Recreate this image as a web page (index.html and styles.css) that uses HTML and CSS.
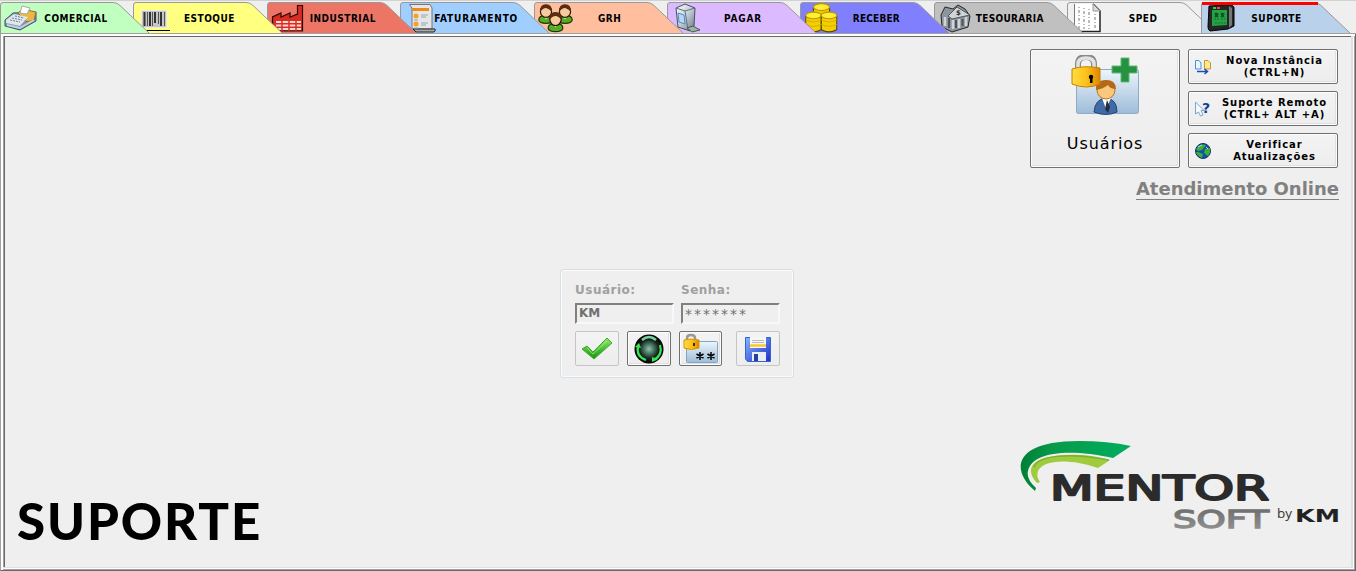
FILE: index.html
```
<!DOCTYPE html>
<html lang="pt-BR">
<head>
<meta charset="utf-8">
<title>Suporte</title>
<link rel="stylesheet" href="styles.css">
</head>
<body>
<svg class="defs" width="0" height="0">
  <defs>
    <path id="tab" d="M.5 33V5Q.5 2.500 3 2.500H113Q117 2.500 120 5.500L149 33"/>
    <linearGradient id="steel" x2="1" y2="1"><stop stop-color="#fff"/><stop offset=".5" stop-color="#c3ccd5"/><stop offset="1" stop-color="#66727e"/></linearGradient>
    <linearGradient id="gold" x2="1"><stop stop-color="#ffdc42"/><stop offset=".5" stop-color="#ffc21a"/><stop offset="1" stop-color="#dc8600"/></linearGradient>
    <linearGradient id="card" x2="0" y2="1"><stop stop-color="#edf5fb"/><stop offset="1" stop-color="#9dbcd9"/></linearGradient>
    <linearGradient id="leaf" x2="0" y2="1"><stop stop-color="#8dec68"/><stop offset="1" stop-color="#16950b"/></linearGradient>
    <linearGradient id="disk" x2="1" y2="1"><stop stop-color="#86b7ff"/><stop offset="1" stop-color="#1c2fc8"/></linearGradient>
    <linearGradient id="green" x2="1"><stop stop-color="#007f35"/><stop offset=".3" stop-color="#079b49"/><stop offset="1" stop-color="#00ad60"/></linearGradient>
    <linearGradient id="soft" x2="0" y2="1"><stop stop-color="#686868"/><stop offset="1" stop-color="#989898"/></linearGradient>
    <radialGradient id="orb" cy=".5"><stop stop-color="#8fc4ae"/><stop offset=".4" stop-color="#3c6656"/><stop offset=".65" stop-color="#17221d"/><stop offset="1" stop-color="#000"/></radialGradient>
    <g id="person"><path d="M-9 9Q-9 3 0 3T9 9Q8 13 0 13T-9 9Z" fill="#58ad20" stroke="#1d3509" stroke-width="1.500"/><path d="M-3 3L0 8L3 3Z" fill="#fff"/><ellipse cy="-2" rx="7" ry="7.500" fill="#f7c99d" stroke="#241207" stroke-width="1.500"/><path d="M-7.500-1Q-8-11 0-11T7.500-1Q5-5 1-6T-7.500-1" fill="#5b2b12"/></g>
    <g id="coins"><path d="M-7-6V7Q0 11 7 7V-6" fill="#f4cf00" stroke="#5c4700"/><ellipse cy="-6" rx="7" ry="3" fill="#ffed36" stroke="#b89700"/><path d="M-7-2Q0 2 7-2M-7 2Q0 6 7 2" fill="none" stroke="#dcb400"/></g>
  </defs>
</svg>
<nav class="tabs">
  <a class="tab comercial"><svg class="shape" width="150" height="34"><use href="#tab"/></svg>
    <svg class="icon" width="38" height="33"><path d="M5 20L13 13L36 12V21L20 30L5 26Z" fill="#8096a9" stroke="#40566a"/><path d="M18 13L22 9L36 12L34 20L27 22Z" fill="#ebb744" stroke="#927135"/><path d="M6 20L14 14L28 17L20 26L6 23Z" fill="#dfe6ec"/><path d="M20 13L22 6L30 8L27 14Z" fill="#fff" stroke="#aaa"/><path d="M10 20L20 22M12 18L22 20M15 16L24 18" stroke="#6f8192" stroke-dasharray="2 1"/><path d="M7 25L20 28L34 20" fill="none" stroke="#c4d2de" stroke-width="2"/></svg><span>COMERCIAL</span></a>
  <a class="tab estoque"><svg class="shape" width="150" height="34"><use href="#tab"/></svg>
    <svg class="icon" width="38" height="33"><path d="M8.500 10.500H33.500V27.500H8.500Z" fill="#c5c5c5" stroke="#e8e8e8"/><path d="M11.500 12V26M17 12V26M22 12V23M28 12V26" stroke="#333" stroke-width="2"/><path d="M14.500 12V26M19.500 12V26M25.500 12V24M31.500 12V26" stroke="#555"/><path d="M11 30.500H37" stroke="#000"/></svg><span>ESTOQUE</span></a>
  <a class="tab industrial"><svg class="shape" width="150" height="34"><use href="#tab"/></svg>
    <svg class="icon" width="38" height="33"><path d="M5.500 31V17L14 13V17L23 13V17L30.500 14V5.500H35.500V31Z" fill="#d82d22" stroke="#2b0806" stroke-width="1.200"/><path d="M9 22H34M9 25.500H34M9 29H34" stroke="#ffd5d0" stroke-width="2"/><path d="M15 18V31M22 18V31M29 18V31M31 8H35" stroke="#d82d22" stroke-width="1.500"/></svg><span>INDUSTRIAL</span></a>
  <a class="tab faturamento"><svg class="shape" width="150" height="34"><use href="#tab"/></svg>
    <svg class="icon" width="38" height="33"><path d="M9.500 4.500H30L32 8V29H12V8Z" fill="#e4e6e8" stroke="#777"/><path d="M13 29H35Q36 31 34 32H16Z" fill="#aaa" stroke="#222"/><path d="M12 8H29V11H12Z" fill="#f08a17"/><circle cx="16" cy="16" r="2.500" fill="#f4a124"/><circle cx="16" cy="24" r="2.500" fill="#f4a124"/><path d="M21 15H28M21 17H26M21 23H28M21 25H26M14 20H18M14 28H18" stroke="#9aa4ac"/></svg><span>FATURAMENTO</span></a>
  <a class="tab grh"><svg class="shape" width="150" height="34"><use href="#tab"/></svg>
    <svg class="icon" width="40" height="33"><use href="#person" transform="translate(12 13) scale(.8)"/><use href="#person" transform="translate(31 13) scale(.8)"/><use href="#person" transform="translate(21.500 21) scale(.82)"/></svg><span>GRH</span></a>
  <a class="tab pagar"><svg class="shape" width="150" height="34"><use href="#tab"/></svg>
    <svg class="icon" width="40" height="33"><path d="M9 8L18 4L28 8L27 26L23 31L11 27Z" fill="url(#steel)" stroke="#45515b"/><path d="M9 8L18 11L28 8M18 11L21 30" stroke="#61717d" fill="none"/><path d="M11 13L17 15L18 24L12 22Z" fill="#b5d9fa" stroke="#538cbb"/><path d="M20 28L26 26L33 30L25 32Z" fill="#9cb3a4" stroke="#455b4e"/></svg><span>PAGAR</span></a>
  <a class="tab receber"><svg class="shape" width="150" height="34"><use href="#tab"/></svg>
    <svg class="icon" width="40" height="33"><use href="#coins" transform="translate(21.500 14) scale(1.150)"/><use href="#coins" transform="translate(13.500 22) scale(1.100)"/><use href="#coins" transform="translate(29 22) scale(1.100)"/></svg><span>RECEBER</span></a>
  <a class="tab tesouraria"><svg class="shape" width="150" height="34"><use href="#tab"/></svg>
    <svg class="icon" width="40" height="33"><path d="M7 15L11 7L19 9L24 5L31 9L36 16L34 27L18 32L8 27Z" fill="#8d949b" stroke="#24282b"/><path d="M14 16L23 7L36 15L18 19Z" fill="#d0d5d8" stroke="#555"/><path d="M19 20V29M25 19V28M32 17V26M11 17V26" stroke="#cfd4d8" stroke-width="2.500"/><path d="M22 20V28M28.500 19V26M15 18V28" stroke="#4b535a" stroke-width="2"/><text x="22" y="15" class="coin">$</text></svg><span>TESOURARIA</span></a>
  <a class="tab sped"><svg class="shape" width="150" height="34"><use href="#tab"/></svg>
    <svg class="icon" width="38" height="33"><path d="M7 4H26L33 11V31H7Z" fill="#fff"/><path d="M7.500 4V31" stroke="#777"/><path d="M26 4L33 11V31.500H9" fill="none" stroke="#222" stroke-width="1.500"/><path d="M26 4V11H33" fill="#ddd" stroke="#999"/><path d="M12 7V29M17 8V29M22 9V29M28 14V29" stroke="#a5a5a5" stroke-width="1.500" stroke-dasharray="1 2 3 2"/></svg><span>SPED</span></a>
  <a class="tab suporte active"><svg class="shape" width="150" height="34"><use href="#tab"/></svg>
    <svg class="icon" width="38" height="33"><path d="M8 6L28 5Q33 5 33 8V26L27 29L9 31Q7 30 7 27Z" fill="#232625" stroke="#000"/><path d="M28 6L31 8V25L28 28Z" fill="#737877"/><path d="M11 10H26V25L11 26Z" fill="#25a344"/><path d="M14 13H17V17H14ZM20 13H23V17H20ZM13 19H18M20 19H25M14 23H25" fill="#0c5825" stroke="#0c5825" stroke-width=".7" stroke-dasharray="2 1"/><path d="M12 8H15" stroke="#3c4" stroke-width="2"/><path d="M16 8H19" stroke="#f44" stroke-width="2"/></svg><span>SUPORTE</span></a>
</nav>
<main class="panel">
  <section class="actions">
    <button class="btn users">
      <svg width="72" height="62"><rect x="7.500" y="14.500" width="62" height="44" rx="2" fill="url(#card)" stroke="#8eabc6"/><path d="M25 57Q26 44 37 43Q48 44 48 57Q37 62 25 57" fill="#416ba7" stroke="#28456e"/><path d="M33 43L37 54L42 43" fill="#fff"/><path d="M38 45L36 54L39 58L41 52Z" fill="#242e3c"/><circle cx="37" cy="35" r="9" fill="#fac77d" stroke="#b9721b"/><path d="M27 35Q26 25 37 25Q47 25 47 34Q41 34 39 30Q34 34 27 35" fill="#b46916"/><path d="M9 18V9Q9 2 17 2T25 9V18" fill="none" stroke="#8a8a8a" stroke-width="6"/><path d="M9 18V9Q9 3 17 3T25 9V18" fill="none" stroke="#e2e2e2" stroke-width="3.500"/><path d="M3 14Q15 10 31 13V29Q18 35 3 29Z" fill="url(#gold)" stroke="#c38000"/><circle cx="22" cy="22" r="2.200"/><path d="M21 23H23.500V28H21Z"/><path d="M52 3H60V11H68V18H60V27H52V18H43V11H52Z" fill="#279142" stroke="#62b974"/></svg>
      <span>Usuários</span>
    </button>
    <div class="stack">
      <button class="btn small"><svg width="18" height="18"><path d="M1.500 2.500H5L7 5V11H1.500Z" fill="#e9f4ff" stroke="#4a92d7"/><path d="M10.500 2.500H14L16.500 5V11H10.500Z" fill="#ffe88f" stroke="#c6962e"/><path d="M3 13.500H13M10.500 11L13.500 13.500L10.500 16" stroke="#174fae" fill="none" stroke-width="1.500"/></svg><span>Nova Instância<br>(CTRL+N)</span></button>
      <button class="btn small"><svg width="18" height="18"><path d="M1.500 2L10 10.500H7L9 15L6.500 16L4.500 12L1.500 14Z" fill="#f6faff" stroke="#77a7cf"/><text x="8" y="13" class="help">?</text></svg><span>Suporte Remoto<br>(CTRL+ ALT +A)</span></button>
      <button class="btn small"><svg width="18" height="18"><circle cx="9" cy="9" r="7.500" fill="#164faa" stroke="#173363"/><path d="M2 7Q6 1 12 3L8 8L4 9ZM11 7L16 6Q17 10 14 14L10 11ZM4 10L9 12L8 16Q3 14 2 10" fill="#3caf35"/><path d="M4 5L8 3M12 5L14 7" stroke="#9de8ff"/></svg><span>Verificar<br>Atualizações</span></button>
    </div>
  </section>
  <a class="online">Atendimento Online</a>
  <form class="login">
    <div class="fields">
      <label>Usuário:<span class="field">KM</span></label>
      <label>Senha:<span class="field stars">*******</span></label>
    </div>
    <div class="tools">
      <button type="button" class="btn tool muted"><svg width="34" height="28"><path d="M2 14L7 11L13 17L27 3L32 8L14 24Z" fill="url(#leaf)" stroke="#3fa838"/><path d="M7 13L13 19L27 6" stroke="#b4ff94" fill="none" opacity=".6"/></svg></button>
      <button type="button" class="btn tool"><svg width="34" height="30"><circle cx="17" cy="15" r="14.500" fill="url(#orb)"/><path d="M10 6Q17 0 24 6" fill="none" stroke="#79d29d" stroke-width="2.500"/><path d="M6 12Q4 23 14 26M28 11Q31 21 22 26" fill="none" stroke="#35e951" stroke-width="2.200"/><path d="M3 13L7 9L9 14ZM20 23L20 28L26 25Z" fill="#35e951"/></svg></button>
      <button type="button" class="btn tool"><svg width="36" height="32"><rect x="4.500" y="8.500" width="31" height="21" rx="1" fill="url(#card)" stroke="#82a3c2"/><path d="M5 8V5Q5 2 9 2T13 5V8" fill="none" stroke="#999" stroke-width="2.500"/><path d="M2 7Q9 5 17 7V15Q9 18 2 15Z" fill="url(#gold)" stroke="#d89500"/><path d="M12 10V13" stroke="#000" stroke-width="1.500"/><path d="M18 19V27M14.500 21L21.500 25M21.500 21L14.500 25M29 19V27M25.500 21L32.500 25M32.500 21L25.500 25" stroke="#000" stroke-width="1.500"/></svg></button>
      <button type="button" class="btn tool muted last"><svg width="28" height="26"><path d="M1.500 1.500H26.500V25.500H3.500L1.500 23Z" fill="url(#disk)" stroke="#3664ce"/><path d="M6 1H22V12H6Z" fill="#f6f6f6"/><path d="M6 9.500H22" stroke="#ffc62b" stroke-width="2.500"/><path d="M8 4.500H20M8 6.500H20" stroke="#bbb"/><path d="M8 16H22V25H8Z" fill="#e8edf6"/><path d="M10 18H14V25H10Z" fill="#25409d"/></svg></button>
    </div>
  </form>
  <footer class="brand">
    <h1>SUPORTE</h1>
    <svg class="logo" width="324" height="100" role="img" aria-label="MentorSoft by KM">
      <path d="M16 61C-8 41-7 11 60 11Q89 11 112 16L94 28C49 18 13 22 9 41Q7 49 17 58Z" fill="url(#green)"/>
      <path d="M18 53C3 36 17 26 48 25Q70 24 91 30L79 38C47 27 23 31 19 41Q17 47 21 52Z" fill="#9fcb3d"/>
      <path d="M15 37C19 26 46 22 90 30" fill="none" stroke="#6aa526" stroke-width="1.500" opacity=".7"/>
      <text class="mentor" x="31" y="70" textLength="219" lengthAdjust="spacingAndGlyphs">MENTOR</text>
      <text class="softtext" x="154" y="98" textLength="96" lengthAdjust="spacingAndGlyphs">SOFT</text>
      <text class="by" x="258" y="88" textLength="15" lengthAdjust="spacingAndGlyphs">by</text>
      <text class="km" x="276" y="92" textLength="45" lengthAdjust="spacingAndGlyphs">KM</text>
    </svg>
  </footer>
</main>
</body>
</html>
```
FILE: styles.css
```
* { box-sizing: border-box; }
body {
  margin: 0;
  width: 1356px;
  height: 571px;
  overflow: hidden;
  display: flex;
  flex-direction: column;
  background: #efefef;
  font-family: "DejaVu Sans", Verdana, sans-serif;
  color: #000;
}
.defs { position: absolute; }
.tabs {
  height: 34px;
  flex: none;
  display: grid;
  grid-template-columns: repeat(10, 133.400px);
  border-top: 1px solid #d2d2d2;
  border-bottom: 1px solid #a0a0a0;
}
.tab { position: relative; isolation: isolate; height: 33px; display: flex; width: 150px; margin-top: -1px; }
.shape { position: absolute; left: 0; top: 0; z-index: -1; stroke: #999; }
.icon { flex: none; }
.tab span {
  position: absolute;
  left: 26px;
  width: 100px;
  top: 12px;
  text-align: center;
  font: bold 10px/14px "DejaVu Sans Condensed", "DejaVu Sans", sans-serif;
  letter-spacing: .5px;
  white-space: nowrap;
}
.comercial { z-index: 9; fill: #c0ffc0; }
.estoque { z-index: 8; fill: #ffff80; }
.industrial { z-index: 7; fill: #ed7566; }
.faturamento { z-index: 6; fill: #9fceff; }
.grh { z-index: 5; fill: #ffbf9f; }
.pagar { z-index: 4; fill: #dcbaff; }
.receber { z-index: 3; fill: #8080ff; }
.tesouraria { z-index: 2; fill: #c0c0c0; }
.sped { z-index: 1; fill: #f0f0f0; }
.suporte { z-index: 10; fill: #b9d1ea; }
.faturamento span, .pagar span { letter-spacing: .8px; }
.receber span { letter-spacing: .2px; }
.tesouraria span { letter-spacing: .3px; }
.active::before {
  content: "";
  position: absolute;
  left: 1px;
  top: 2px;
  width: 116px;
  height: 3px;
  background: #f00;
}
.coin { font: bold 7px "DejaVu Sans"; fill: #333; }
.panel {
  flex: 1;
  display: flex;
  flex-direction: column;
  padding: 10px 12px 0 14px;
  border: 1px solid #a0a0a0;
  border-top: 0;
  border-right-color: #696969;
  border-bottom-color: #696969;
  box-shadow: inset 2px 2px #fff, inset -1px -1px #a0a0a0, inset -2px -2px #fff, inset -4px -3px #e0e0e0, inset 3px 0 #a0a0a0, inset 4px 3px #696969;
}
.actions { display: flex; gap: 8px; justify-content: flex-end; margin: 5px 5px 0 0; }
.btn {
  font-family: inherit;
  color: #000;
  padding: 0;
  display: flex;
  align-items: center;
  justify-content: center;
  border: 1px solid #707070;
  border-radius: 2px;
  background: linear-gradient(#f3f3f3, #ededed);
  box-shadow: inset 0 0 0 1px #fcfcfc, inset -2px -2px #e0e0e0;
}
.users { width: 150px; height: 119px; flex-direction: column; justify-content: flex-start; padding-top: 5px; }
.users span { font-size: 16px; line-height: 20px; margin-top: 17px; letter-spacing: .9px; }
.stack { display: grid; grid-template-rows: repeat(3, 35px); row-gap: 7px; }
.small { width: 150px; justify-content: flex-start; padding-left: 5px; }
.small span { flex: 1; font: bold 10px/12px "DejaVu Sans", sans-serif; letter-spacing: .95px; }
.help { font: bold 14px "DejaVu Sans"; fill: #123f98; }
.online {
  align-self: flex-end;
  margin: 10px 4px 0 0;
  font-size: 18px;
  line-height: 21px;
  font-weight: bold;
  color: #808080;
  border-bottom: 1px solid #808080;
}
.login {
  width: 234px;
  height: 109px;
  margin: 69px 0 0 545px;
  padding: 13px 13px 0 14px;
  border: 1px solid #d5dfe5;
  border-radius: 3px;
  box-shadow: inset 0 0 0 1px #fafafa;
}
.fields { display: flex; gap: 7px; }
.fields label { width: 99px; font-size: 12px; line-height: 14px; font-weight: bold; letter-spacing: .5px; color: #a0a0a0; }
.field {
  display: block;
  height: 21px;
  margin-top: 6px;
  padding: 1px 2px;
  border: 2px solid;
  border-color: #808080 #f8f8f8 #f8f8f8 #808080;
  font-size: 12px;
  line-height: 15px;
  letter-spacing: 0;
  color: #707070;
}
.field.stars { font-weight: normal; font-size: 14px; line-height: 16px; letter-spacing: 2px; }
.tools { display: flex; gap: 8px; margin-top: 7px; }
.tool { width: 44px; height: 35px; }
.tool svg { flex: none; }
.muted { border-color: #c5c5c5; box-shadow: none; }
.last { margin-left: 6px; }
.brand { flex: 1; display: flex; justify-content: space-between; padding-top: 52px; }
.brand h1 { margin: 61px 0 0 2px; font: 900 51px/60px Lato, Carlito, sans-serif; letter-spacing: 1.900px; }
.logo { overflow: visible; }
.mentor { font: 33px "DejaVu Sans"; fill: #2b2b2b; stroke: #2b2b2b; stroke-width: 2px; stroke-linejoin: round; }
.softtext { font: 25px "DejaVu Sans"; fill: url(#soft); stroke: url(#soft); stroke-width: 1.400px; }
.by { font: 13px "Open Sans"; fill: #333; }
.km { font: bold 17px "DejaVu Sans"; fill: #222; }
```
